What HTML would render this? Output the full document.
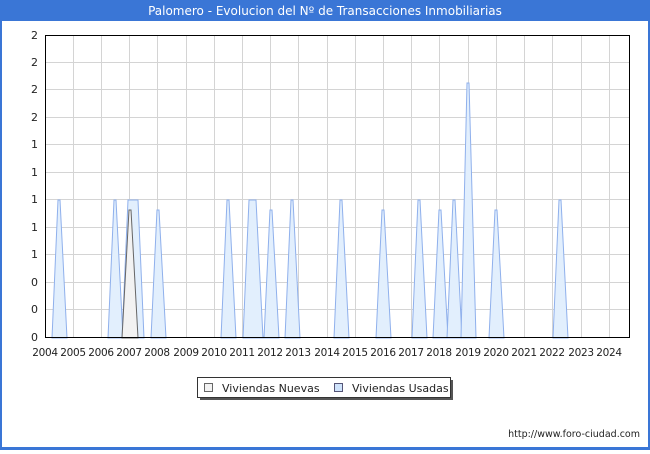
<!DOCTYPE html>
<html><head><style>
body{margin:0;width:650px;height:450px;overflow:hidden;background:#fff;font-family:"DejaVu Sans","Liberation Sans",sans-serif}
</style></head><body>
<svg width="650" height="450" xmlns="http://www.w3.org/2000/svg" font-family="DejaVu Sans, Liberation Sans, sans-serif">
<rect x="0" y="0" width="650" height="450" fill="#3a76d6"/>
<rect x="2" y="21" width="646" height="426" fill="#fff"/>
<text x="325" y="15" fill="#fff" font-size="12" text-anchor="middle">Palomero - Evolucion del Nº de Transacciones Inmobiliarias</text>
<g stroke="#d4d4d4" stroke-width="1">
<line x1="45" x2="630" y1="62.5" y2="62.5"/><line x1="45" x2="630" y1="89.5" y2="89.5"/><line x1="45" x2="630" y1="117.5" y2="117.5"/><line x1="45" x2="630" y1="144.5" y2="144.5"/><line x1="45" x2="630" y1="172.5" y2="172.5"/><line x1="45" x2="630" y1="199.5" y2="199.5"/><line x1="45" x2="630" y1="227.5" y2="227.5"/><line x1="45" x2="630" y1="254.5" y2="254.5"/><line x1="45" x2="630" y1="282.5" y2="282.5"/><line x1="45" x2="630" y1="309.5" y2="309.5"/>
<line y1="35" y2="338" x1="73.5" x2="73.5"/><line y1="35" y2="338" x1="101.5" x2="101.5"/><line y1="35" y2="338" x1="129.5" x2="129.5"/><line y1="35" y2="338" x1="157.5" x2="157.5"/><line y1="35" y2="338" x1="186.5" x2="186.5"/><line y1="35" y2="338" x1="214.5" x2="214.5"/><line y1="35" y2="338" x1="242.5" x2="242.5"/><line y1="35" y2="338" x1="270.5" x2="270.5"/><line y1="35" y2="338" x1="298.5" x2="298.5"/><line y1="35" y2="338" x1="327.5" x2="327.5"/><line y1="35" y2="338" x1="355.5" x2="355.5"/><line y1="35" y2="338" x1="383.5" x2="383.5"/><line y1="35" y2="338" x1="411.5" x2="411.5"/><line y1="35" y2="338" x1="439.5" x2="439.5"/><line y1="35" y2="338" x1="468.5" x2="468.5"/><line y1="35" y2="338" x1="496.5" x2="496.5"/><line y1="35" y2="338" x1="524.5" x2="524.5"/><line y1="35" y2="338" x1="552.5" x2="552.5"/><line y1="35" y2="338" x1="581.5" x2="581.5"/><line y1="35" y2="338" x1="609.5" x2="609.5"/>
</g>
<g fill="#e2effd" stroke="#8fb0ec" stroke-width="1">
<polygon points="52,338 58,200 60,200 67,338"/>
<polygon points="108,338 114,200 116,200 123,338"/>
<polygon points="122,338 128,200 138,200 144,338"/>
<polygon points="151,338 157,210 159,210 166,338"/>
<polygon points="221,338 227,200 229,200 236,338"/>
<polygon points="243,338 249,200 256,200 263,338"/>
<polygon points="264,338 270,210 272,210 279,338"/>
<polygon points="285,338 291,200 293,200 300,338"/>
<polygon points="334,338 340,200 342,200 349,338"/>
<polygon points="376,338 382,210 384,210 391,338"/>
<polygon points="412,338 418,200 420,200 427,338"/>
<polygon points="433,338 439,210 441,210 448,338"/>
<polygon points="447,338 453,200 455,200 462,338"/>
<polygon points="461,338 467,83 469,83 476,338"/>
<polygon points="489,338 495,210 497,210 504,338"/>
<polygon points="553,338 559,200 561,200 568,338"/>
</g>
<polygon points="122,338 129,210 131,210 138,338" fill="#f2f2f2" stroke="#666" stroke-width="1"/>
<rect x="45.5" y="35.5" width="584" height="302" fill="none" stroke="#000" stroke-width="1"/>
<g font-size="11" fill="#222" text-anchor="end">
<text x="38" y="39">2</text><text x="38" y="66">2</text><text x="38" y="93">2</text><text x="38" y="121">2</text><text x="38" y="148">1</text><text x="38" y="176">1</text><text x="38" y="203">1</text><text x="38" y="231">1</text><text x="38" y="258">1</text><text x="38" y="286">0</text><text x="38" y="313">0</text><text x="38" y="341">0</text>
</g>
<g font-size="10.5" fill="#222" text-anchor="middle" letter-spacing="-0.3">
<text x="45" y="356">2004</text><text x="73" y="356">2005</text><text x="101" y="356">2006</text><text x="129" y="356">2007</text><text x="157" y="356">2008</text><text x="186" y="356">2009</text><text x="214" y="356">2010</text><text x="242" y="356">2011</text><text x="270" y="356">2012</text><text x="298" y="356">2013</text><text x="327" y="356">2014</text><text x="355" y="356">2015</text><text x="383" y="356">2016</text><text x="411" y="356">2017</text><text x="439" y="356">2018</text><text x="468" y="356">2019</text><text x="496" y="356">2020</text><text x="524" y="356">2021</text><text x="552" y="356">2022</text><text x="581" y="356">2023</text><text x="609" y="356">2024</text>
</g>
<rect x="200" y="380" width="253" height="20" fill="#555"/>
<rect x="197.5" y="377.5" width="253" height="20" fill="#fff" stroke="#333"/>
<rect x="204.5" y="383.5" width="8" height="8" fill="#f2f2f2" stroke="#666"/>
<text x="222" y="392" font-size="11" fill="#222">Viviendas Nuevas</text>
<rect x="334.5" y="383.5" width="8" height="8" fill="#cfe3fb" stroke="#557"/>
<text x="352" y="392" font-size="11" fill="#222">Viviendas Usadas</text>
<text x="640" y="437" font-size="9.5" fill="#222" text-anchor="end">http://www.foro-ciudad.com</text>
</svg>
</body></html>
